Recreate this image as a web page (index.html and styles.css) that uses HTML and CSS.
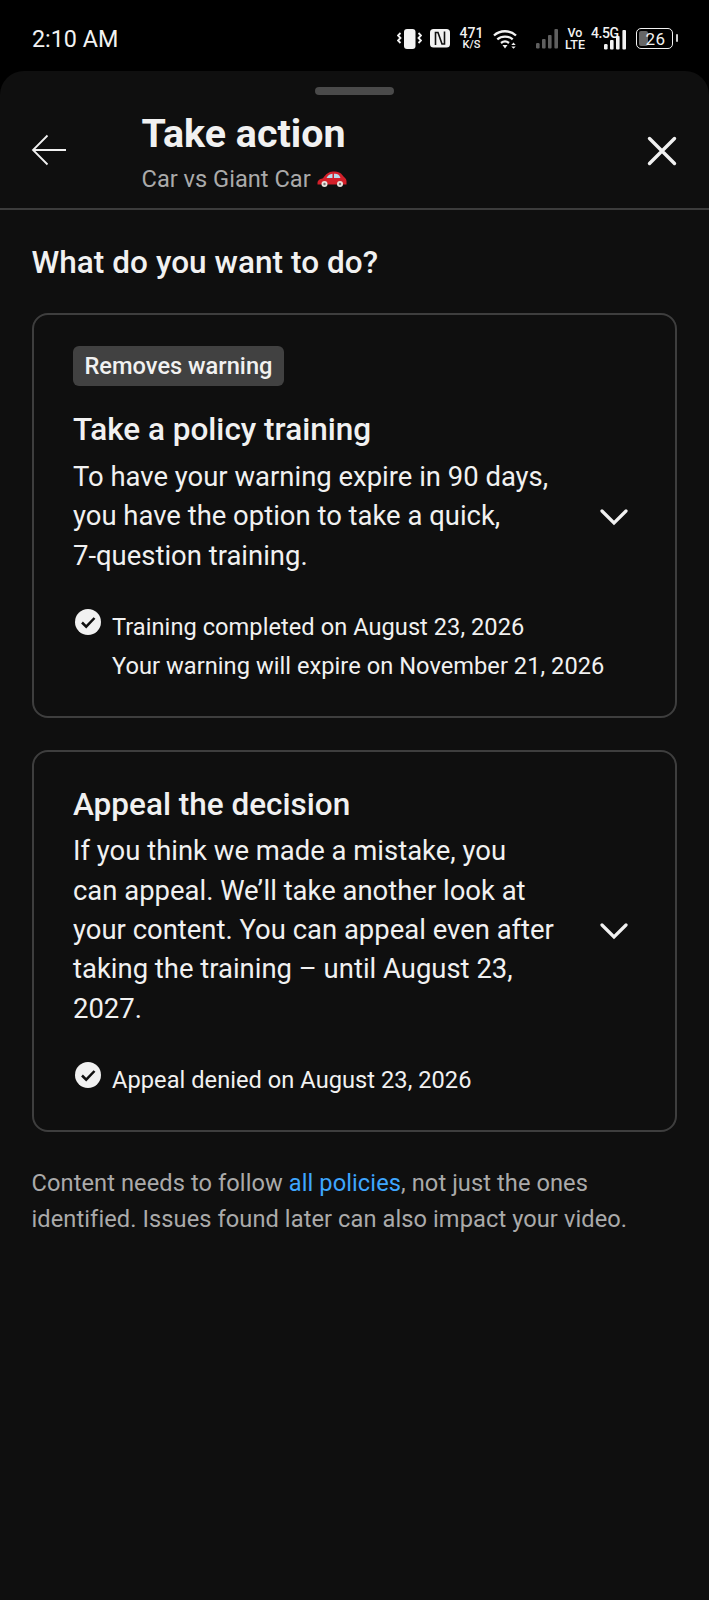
FILE: index.html
```html
<!DOCTYPE html>
<html lang="en">
<head>
<meta charset="utf-8">
<title>Take action</title>
<link rel="stylesheet" href="styles.css">
</head>
<body>
<div class="status">
  <span class="time">2:10 AM</span>
  <div class="status-icons">
    <svg class="i-vib" viewBox="0 0 25 20" width="25" height="20"><rect x="7" y="0" width="11.500" height="20" rx="3" fill="#f2f2f2"/><path d="M3.500 4 1 6.500 3.500 9 1 11.500 3.500 14M21.500 4 24 6.500 21.500 9 24 11.500 21.500 14" fill="none" stroke="#f2f2f2" stroke-width="1.800"/></svg>
    <svg class="i-nfc" viewBox="0 0 20 19" width="20" height="19"><rect width="20" height="18.500" rx="3.500" fill="#f2f2f2"/><path d="M5.500 16V3.500h2.500l4 11.500h2.500V2.500" fill="none" stroke="#111" stroke-width="1.600"/></svg>
    <div class="speed"><span class="sp-n">471</span><span class="sp-u">K/S</span></div>
    <svg class="i-wifi" viewBox="0 0 24 20" width="24" height="20"><path d="M1 6.500C7 .8 17 .8 23 6.500M4.300 10.300c4.200-3.700 11.200-3.700 15.400 0M8 14c2.300-1.800 5.700-1.800 8 0" fill="none" stroke="#f2f2f2" stroke-width="2.300"/><path d="M9.500 16h5L12 19.500z" fill="#f2f2f2"/><path d="M20.500 13.500l2.200 2.400h-4.400zM20.500 19.800l2.200-2.400h-4.400z" fill="#f2f2f2"/></svg>
    <svg class="i-sig1" viewBox="0 0 22 20" width="22" height="20"><g fill="#5f5f5f"><rect x="0" y="14" width="3.600" height="5.500" rx="1.200"/><rect x="6" y="10" width="3.600" height="9.500" rx="1"/><rect x="12" y="6" width="3.600" height="13.500" rx="1"/><rect x="18.400" y="0" width="3.600" height="19.500" rx="1"/></g></svg>
    <div class="volte"><span>Vo</span><span>LTE</span></div>
    <div class="sig2">
      <span class="g45">4.5G</span>
      <svg viewBox="0 0 22 20" width="22" height="20"><g fill="#f2f2f2"><rect x="0" y="14" width="3.600" height="5.500" rx="1.200"/><rect x="6" y="10" width="3.600" height="9.500" rx="1"/><rect x="12" y="6" width="3.600" height="13.500" rx="1"/><rect x="18.400" y="0" width="3.600" height="19.500" rx="1"/></g></svg>
    </div>
    <div class="battery"><span class="bat-fill"></span><span class="bat-num">26</span><span class="bat-tip"></span></div>
  </div>
</div>

<main class="sheet">
  <div class="handle"></div>
  <header class="head">
    <svg class="back" viewBox="0 0 36 32" width="36" height="32"><path d="M35 16H2M16.500 1.500 2 16 16.500 30.500" fill="none" stroke="#f1f1f1" stroke-width="1.800"/></svg>
    <div class="titles">
      <h1>Take action</h1>
      <p class="sub">Car vs Giant Car <svg class="car" viewBox="0 0 30 16" width="30" height="16"><path d="M.5 12.500c0-2.800 1.500-4.200 5.500-5.200C9 3 11.500.8 16 .5c4.500-.3 7.500.8 9.500 3.800 1.500 2.200 4 3.200 4 5.700v3.500H.5z" fill="#d3202a"/><path d="M9.500 7C11 4.500 12.500 3 15.500 2.800V7zM17 2.800c3-.2 5 .3 6.500 4.200H17z" fill="#b9dcea"/><circle cx="7.500" cy="13" r="3" fill="#e9e4df"/><circle cx="23" cy="13" r="3" fill="#e9e4df"/><circle cx="7.500" cy="13" r="1.200" fill="#777"/><circle cx="23" cy="13" r="1.200" fill="#777"/></svg></p>
    </div>
    <svg class="close" viewBox="0 0 30 30" width="30" height="30"><path d="M2.500 2.500 27.500 27.500M27.500 2.500 2.500 27.500" fill="none" stroke="#f1f1f1" stroke-width="3.400" stroke-linecap="round"/></svg>
  </header>

  <div class="body">
    <h2>What do you want to do?</h2>

    <section class="card">
      <span class="tag">Removes warning</span>
      <h3>Take a policy training</h3>
      <div class="card-main">
        <p class="desc">To have your warning expire in 90 days,<br>you have the option to take a quick,<br>7-question training.</p>
        <svg class="chev" viewBox="0 0 28 18" width="28" height="18"><path d="M2 3 14 15 26 3" fill="none" stroke="#f1f1f1" stroke-width="3.200" stroke-linecap="round"/></svg>
      </div>
      <div class="result">
        <svg class="check" viewBox="0 0 26 26" width="26" height="26"><circle cx="13" cy="13" r="13" fill="#f1f1f1"/><path d="M7 13.500l4.200 4.200L19.500 9" fill="none" stroke="#0f0f0f" stroke-width="2.500"/></svg>
        <p>Training completed on August 23, 2026<br>Your warning will expire on November 21, 2026</p>
      </div>
    </section>

    <section class="card card-plain">
      <h3>Appeal the decision</h3>
      <div class="card-main">
        <p class="desc">If you think we made a mistake, you<br>can appeal. We’ll take another look at<br>your content. You can appeal even after<br>taking the training – until August 23,<br>2027.</p>
        <svg class="chev" viewBox="0 0 28 18" width="28" height="18"><path d="M2 3 14 15 26 3" fill="none" stroke="#f1f1f1" stroke-width="3.200" stroke-linecap="round"/></svg>
      </div>
      <div class="result">
        <svg class="check" viewBox="0 0 26 26" width="26" height="26"><circle cx="13" cy="13" r="13" fill="#f1f1f1"/><path d="M7 13.500l4.200 4.200L19.500 9" fill="none" stroke="#0f0f0f" stroke-width="2.500"/></svg>
        <p>Appeal denied on August 23, 2026</p>
      </div>
    </section>

    <p class="note">Content needs to follow <a href="#">all policies</a>, not just the ones<br>identified. Issues found later can also impact your video.</p>
  </div>
</main>
</body>
</html>
```
FILE: styles.css
```css
* { box-sizing: border-box; }
html, body { margin: 0; padding: 0; background: #000; }
body {
  width: 709px;
  height: 1600px;
  overflow: hidden;
  font-family: Roboto, "Liberation Sans", sans-serif;
  color: #f1f1f1;
  display: flex;
  flex-direction: column;
}
h1, h2, h3, p { margin: 0; }

.status {
  height: 71px;
  flex: none;
  display: flex;
  align-items: center;
  justify-content: space-between;
  padding: 6px 32px 0 32px;
  color: #f2f2f2;
}
.time { font-size: 23.300px; }
.status-icons { display: flex; align-items: center; height: 24px; }
.i-vib { margin-right: 8px; }
.i-nfc { margin-right: 11px; }
.speed { display: flex; flex-direction: column; align-items: center; width: 21px; margin-right: 11px; font-weight: 500; }
.sp-n { font-size: 14px; line-height: 12px; }
.sp-u { font-size: 11px; line-height: 11px; }
.i-wifi { margin-right: 19px; }
.i-sig1 { margin-right: 7px; }
.volte { display: flex; flex-direction: column; align-items: center; width: 20px; margin-right: 6px; font-size: 12.500px; line-height: 12px; font-weight: 500; }
.sig2 { position: relative; width: 35px; height: 22px; margin-right: 10px; display: flex; justify-content: flex-end; align-items: flex-end; }
.g45 { position: absolute; left: 0; top: -2px; font-size: 14px; line-height: 14px; font-weight: 500; letter-spacing: -.4px; }
.battery { position: relative; width: 37px; height: 21px; border: 1.500px solid #f2f2f2; border-radius: 5px; margin-right: 4px; display: flex; align-items: center; justify-content: center; }
.bat-fill { position: absolute; left: 2px; top: 2px; bottom: 2px; width: 9px; background: #666; border-radius: 2px; }
.bat-num { position: relative; font-size: 17px; letter-spacing: .5px; left: 1px; }
.bat-tip { position: absolute; right: -6px; top: 5px; width: 2.500px; height: 8px; background: #ccc; border-radius: 1px; }

.sheet {
  flex: 1;
  background: #0f0f0f;
  border-radius: 24px 24px 0 0;
}
.handle { width: 79px; height: 8px; margin: 16px auto 0; background: #4a4a4a; border-radius: 4px; }
.head {
  height: 115px;
  display: flex;
  align-items: flex-start;
  border-bottom: 2px solid #3c3c3c;
  padding: 0 32px 0 31px;
}
.back { margin-top: 39px; flex: none; }
.titles { margin-left: 74.500px; flex: 1; margin-top: 17px; }
h1 { font-size: 39.400px; font-weight: 700; line-height: 44px; color: #f1f1f1; }
.sub { font-size: 23.640px; line-height: 30px; color: #aaa; margin-top: 8px; display: flex; align-items: center; gap: 6px; }
.car { flex: none; }
.close { margin-top: 41px; flex: none; }

.body { padding: 34px 32px 0 32px; }
h2 { font-size: 31.500px; font-weight: 500; letter-spacing: .05px; line-height: 38px; margin: 0 0 31px -.5px; }

.card {
  width: 645px;
  border: 2px solid #3e3e3e;
  border-radius: 16px;
  padding: 31px 40px 30px 39px;
  margin-bottom: 32px;
}
.card-plain { padding-top: 29px; }
.tag {
  display: inline-block;
  height: 40px;
  line-height: 40px;
  padding: 0 11.500px;
  font-size: 23.640px;
  font-weight: 500;
  color: #f1f1f1;
  background: #414141;
  border-radius: 6px;
  margin-bottom: 20px;
}
h3 { font-size: 31.500px; font-weight: 500; line-height: 48px; margin-bottom: 4px; }
.card-plain h3 { margin-bottom: 3px; }
.card-main { display: flex; align-items: center; justify-content: space-between; }
.desc { font-size: 27.450px; line-height: 39.300px; }
.chev { flex: none; margin: 0 7px 0 0; }
.result { display: flex; align-items: flex-start; margin-top: 33px; }
.check { flex: none; margin-left: 2px; margin-right: 11px; }
.result p { font-size: 23.640px; letter-spacing: .04px; line-height: 39.300px; margin-top: -1px; }

.note { font-size: 23.640px; letter-spacing: .08px; line-height: 36px; color: #aaa; margin: 33px 0 0 -.5px; }
.note a { color: #3ea6ff; text-decoration: none; }
```
